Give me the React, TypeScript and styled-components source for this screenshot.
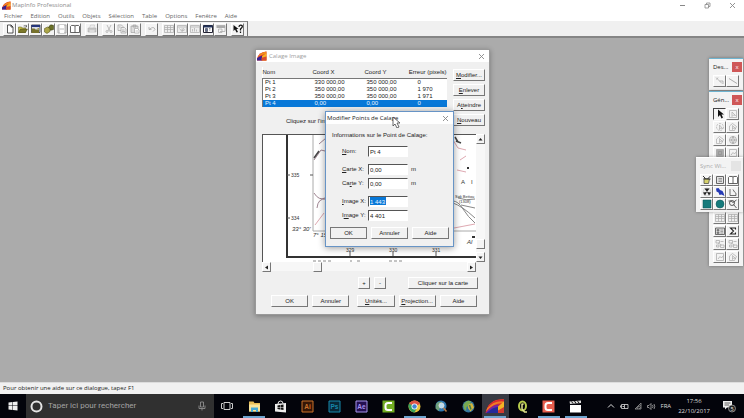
import React from "react";
import styled, { createGlobalStyle, css } from "styled-components";

const GlobalStyle = createGlobalStyle`
  *, *::before, *::after { box-sizing: border-box; }
  body { margin: 0; background: #ababab; overflow: hidden; }
  button, input { font: inherit; color: inherit; padding: 0; margin: 0; border-radius: 0; }
`;

const uiFont = `"Open Sans", "Noto Sans", sans-serif`;
const dialogFont = `"Liberation Sans", Arial, sans-serif`;

/* ---------- application shell ---------- */

const Shell = styled.div`
  display: flex;
  flex-direction: column;
  height: 100vh;
  font: 6px/8px ${uiFont};
  color: #333;
`;

const AppTitle = styled.header`
  display: flex;
  align-items: center;
  height: 10px;
  padding: 0 8px 0 2px;
  gap: 1px;
  background: #fff;
  color: #8c8c8c;
`;

const AppName = styled.h1`
  flex: 1;
  margin: 0;
  font: inherit;
`;

const CaptionButtons = styled.div`
  display: flex;
  gap: 17px;
`;

const CaptionButton = styled.button`
  display: flex;
  align-items: center;
  justify-content: center;
  width: 8px;
  height: 8px;
  border: 0;
  background: none;
  color: #888;
`;

const MenuBar = styled.nav`
  display: flex;
  align-items: center;
  gap: 8px;
  height: 11px;
  padding: 0 4px;
  background: #fff;
`;

const MenuItem = styled.button`
  border: 0;
  background: none;
  color: #666;
  line-height: 10px;
`;

const ToolStrip = styled.div`
  height: 17px;
  background: #f0f0f0;
  border-bottom: 2px solid #858585;
`;

const ToolBar = styled.div`
  display: flex;
  align-items: center;
  gap: 4px;
  width: max-content;
  height: 15px;
  padding: 0 3px;
  border-top: 1px solid #888;
  border-right: 1px solid #777;
`;

const ToolGroup = styled.div`
  display: flex;
`;

const ToolButton = styled.button<{ $pressed?: boolean }>`
  display: flex;
  align-items: center;
  justify-content: center;
  width: 13px;
  height: 13px;
  background: #f4f4f4;
  border: 1px solid;
  border-color: ${(p) => (p.$pressed ? "#444 #fff #fff #444" : "#fff #777 #777 #fff")};
`;

const Workspace = styled.main`
  position: relative;
  flex: 1;
  min-height: 0;
  background: #ababab;
`;

const StatusBar = styled.footer`
  height: 12px;
  padding: 0 3px;
  border-top: 1px solid #ddd;
  background: #f1f1f1;
  color: #222;
  font: 6px/11px ${uiFont};
`;

/* ---------- windows ---------- */

const WindowFrame = styled.section`
  position: absolute;
  left: 255px;
  top: 11px;
  width: 235px;
  background: #f0f0f0;
  border: 1px solid #999;
  box-shadow: 0 1px 5px rgba(0, 0, 0, 0.3);
  color: #222;
  font: 6px/7px ${dialogFont};
`;

const ModalFrame = styled(WindowFrame)`
  left: 325px;
  top: 73px;
  width: 129px;
  border: 1px solid #6794c6;
  box-shadow: 0 1px 7px rgba(0, 0, 0, 0.4);
`;

const TitleBar = styled.header<{ $muted?: boolean }>`
  display: flex;
  align-items: center;
  gap: 2px;
  height: 12px;
  padding: 0 4px 0 1px;
  background: #fff;
  color: ${(p) => (p.$muted ? "#a0a0a0" : "#222")};
  font: 6px/8px ${uiFont};
`;

const TitleText = styled.h2`
  flex: 1;
  margin: 0;
  font: inherit;
  white-space: nowrap;
`;

const WindowBody = styled.div`
  padding: 5px 4px 7px 6px;
`;

const UpperArea = styled.div`
  display: flex;
  justify-content: space-between;
  height: 64px;
`;

const PointsArea = styled.div`
  width: 184px;
`;

const PointTable = styled.table`
  width: 100%;
  table-layout: fixed;
  border-collapse: collapse;
  background: #fff;

  th, td {
    height: 7px;
    padding: 0 0 0 2px;
    text-align: left;
    font-weight: normal;
    line-height: 7px;
    white-space: nowrap;
  }
  th { height: 11px; background: #f0f0f0; padding-left: 0; }
  th:last-child { direction: rtl; }
  tbody { border-left: 1px solid #777; border-top: 1px solid #777; }
`;

const PointRow = styled.tr<{ $selected: boolean }>`
  ${(p) => p.$selected && css`background: #0878d8; color: #e7f3ff;`}
`;

const Hint = styled.p`
  margin: 11px 0 0 24px;
`;

const SideButtons = styled.div`
  display: flex;
  flex-direction: column;
  gap: 3px;
  width: 32px;
  padding-top: 2px;
`;

const PushButton = styled.button<{ $default?: boolean }>`
  min-width: 0;
  height: 12px;
  border: 1px solid;
  border-color: ${(p) => (p.$default ? "#777" : "#fff #777 #777 #fff")};
  background: #f1f1f1;
  white-space: nowrap;
  line-height: 9px;
  u { text-underline-offset: 1px; }
`;

const MapPane = styled.div`
  display: grid;
  grid-template-columns: 1fr 9px;
  grid-template-rows: 128px 9px;
  margin-top: 3px;
`;

const MapView = styled.svg`
  display: block;
  width: 100%;
  height: 128px;
  background: #fff;
  border-top: 1px solid #555;
  border-left: 1px solid #555;
`;

const ScrollTrack = styled.div<{ $vertical?: boolean }>`
  display: flex;
  flex-direction: ${(p) => (p.$vertical ? "column" : "row")};
  background: #f7f7f7;
`;

const ScrollButton = styled(ToolButton)`
  width: 9px;
  height: 10px;
  flex: none;
`;

const TrackGap = styled.span<{ $grow: number }>`
  flex: ${(p) => p.$grow};
`;

const VerticalGap = styled.span`
  height: 3px;
`;

const ZoomRow = styled.div`
  display: flex;
  justify-content: flex-end;
  gap: 4px;
  margin: 6px 7px 6px 0;
`;

const ZoomButton = styled(PushButton)`
  width: 12px;
`;

const MapButton = styled(PushButton)`
  width: 70px;
  margin-left: 18px;
`;

const ButtonRow = styled.div`
  display: grid;
  grid-template-columns: repeat(2, 1fr) 0 repeat(3, 1fr);
  column-gap: 4px;
  padding: 0 8px 0 9px;
`;

const ModalBody = styled.form`
  padding: 8px 4px 7px;
`;

const ModalHeading = styled.p`
  margin: 0 0 7px 2px;
`;

const FieldGroup = styled.div`
  display: grid;
  gap: 3px;
  margin: 0 0 7px 12px;
  &:last-of-type { margin-bottom: 6px; }
`;

const Field = styled.div`
  display: grid;
  grid-template-columns: 25px 40px 1fr;
  column-gap: 1px;
  align-items: center;
  height: 11px;
`;

const TextBox = styled.input<{ $selected?: boolean }>`
  width: 40px;
  height: 11px;
  padding-left: 1px;
  border: 1px solid;
  border-color: #555 #fff #fff #555;
  outline: 0;
  background: ${(p) =>
    p.$selected ? "linear-gradient(#0878d8, #0878d8) 1px 0 / 16px 8px no-repeat #fff" : "#fff"};
  color: ${(p) => (p.$selected ? "#e7f3ff" : "#222")};
`;

const Unit = styled.span`
  padding-left: 2px;
`;

const ModalButtons = styled.footer`
  display: grid;
  grid-template-columns: repeat(3, 1fr);
  column-gap: 4px;
`;

const Pointer = styled.svg`
  position: absolute;
  left: 66px;
  top: 4px;
  width: 9px;
  height: 12px;
`;

/* ---------- palettes ---------- */

const Palette = styled.section<{ $top: number }>`
  position: absolute;
  right: 1px;
  top: ${(p) => p.$top}px;
  width: 34px;
  padding: 0 3px 3px 4px;
  background: #f3f3f3;
  border-top: 1px solid #6fb4d0;
  box-shadow: 0 0 3px rgba(0, 0, 0, 0.35);
`;

const SyncPalette = styled(Palette)`
  width: 47px;
  border-top-color: #fff;
  padding: 0 4px 2px;
`;

const PaletteTitle = styled.header<{ $muted?: boolean }>`
  display: flex;
  align-items: center;
  justify-content: space-between;
  height: 16px;
  color: ${(p) => (p.$muted ? "#aaa" : "#222")};
`;

const PaletteHeading = styled.h3`
  margin: 0;
  font: inherit;
`;

const PaletteClose = styled.button<{ $muted?: boolean }>`
  width: 10px;
  height: 10px;
  margin-right: -2px;
  border: 0;
  background: ${(p) => (p.$muted ? "#e4e4e4" : "#cf5757")};
  color: #fff;
  line-height: 8px;
`;

const PaletteGrid = styled.div<{ $columns: number }>`
  display: grid;
  grid-template-columns: repeat(${(p) => p.$columns}, 13px);
  grid-auto-rows: 12px;
  row-gap: ${(p) => (p.$columns === 2 ? 1 : 0)}px;

  button { height: 12px; }
`;

/* ---------- taskbar ---------- */

const TaskBar = styled.nav`
  display: flex;
  height: 24px;
  background: #03040b;
  color: #ddd;
`;

const StartButton = styled.button`
  display: flex;
  align-items: center;
  justify-content: center;
  width: 26px;
  border: 0;
  background: none;
`;

const SearchBox = styled.label`
  display: flex;
  align-items: center;
  gap: 5px;
  width: 188px;
  padding: 0 7px 0 4px;
  background: #303030;
`;

const SearchInput = styled.input`
  flex: 1;
  min-width: 0;
  border: 0;
  outline: 0;
  background: none;
  font: 8px/10px Roboto, sans-serif;
  &::placeholder { color: #a4a4a4; opacity: 1; }
`;

const AppList = styled.div`
  display: grid;
  grid-template-columns: repeat(14, 1fr);
  flex: 0 0 375px;
`;

const AppButton = styled.button<{ $open?: boolean; $active?: boolean }>`
  display: flex;
  align-items: center;
  justify-content: center;
  border: 0;
  background: ${(p) => (p.$active ? "#383a43" : "none")};
`;

const AppFace = styled.span<{ $open?: boolean }>`
  display: flex;
  align-items: center;
  justify-content: center;
  width: 22px;
  height: 24px;
  box-shadow: ${(p) => (p.$open ? "inset 0 -2px #6ea4cf" : "none")};
`;

const Tray = styled.div`
  display: flex;
  align-items: center;
  justify-content: flex-end;
  flex: 1;
  gap: 5px;
  padding-right: 8px;
`;

const Clock = styled.time`
  margin: 0 7px 0 2px;
  text-align: center;
  line-height: 10px;
`;

const Glyph = styled.svg<{ $size: number }>`
  display: block;
  flex: none;
  width: ${(p) => p.$size}px;
  height: ${(p) => p.$size}px;
`;

/* ---------- drawings ---------- */

const MapInfoLogo = ({ size = 9 }: { size?: number }) => (
  <Glyph $size={size} viewBox="0 0 18 18" aria-hidden>
    <path d="M0 14Q3 2 17 1v16H0z" fill="#d92a32" />
    <path d="M3 8Q8 2 17 1v5Q8 6 2 12z" fill="#f28a1c" />
    <path d="M0 13q6-5 10-4v8H0z" fill="#3a2390" />
    <path d="M9 9l8-5v13H9z" fill="#f6b221" />
    <path d="M8 12l9-2v7H8z" fill="#d94a30" />
  </Glyph>
);

const CloseGlyph = () => (
  <Glyph $size={7} viewBox="0 0 14 14" fill="none" stroke="currentColor" strokeWidth="1.8" aria-hidden>
    <path d="M2 2l10 10M12 2L2 12" />
  </Glyph>
);

const drawings: Record<string, React.ReactNode> = {
  page: <path d="M5 2h7l4 4v12H5zM12 2v4h4" fill="#fff" stroke="#222" strokeWidth="1.5" />,
  folder: (
    <>
      <path d="M1 6h6l2 2h6v9H1z" fill="#c9c24c" stroke="#55521c" />
      <path d="M5 10h14l-4 7H1z" fill="#7d792a" stroke="#44420c" />
      <path d="M11 4q4-3 6 1m0-3v4h-4" fill="none" stroke="#222" />
    </>
  ),
  workspace: (
    <>
      <path d="M1 2h17v15H1z" fill="#d9dce8" stroke="#223" strokeWidth="1.5" />
      <path d="M1 2h17v4H1z" fill="#24367c" />
      <path d="M1 9h6l2 2h7v7H1z" fill="#77722c" />
      <path d="M13 8h3v3h-3z" fill="#a19c43" />
    </>
  ),
  dbms: (
    <>
      <path d="M9 6q4-7 10-3v8q-6 3-10 0z" fill="#697028" stroke="#34380c" />
      <path d="M1 9l6-3 5 3v6l-6 4-5-3z" fill="#aaa548" stroke="#49460c" />
    </>
  ),
  save: (
    <>
      <path d="M2 2h16v16H2z" fill="#ddd" stroke="#aaa" strokeWidth="2" />
      <path d="M5 2h9v6H5zM6 12h8v6H6z" fill="#fff" />
    </>
  ),
  book: <path d="M1 5l2-2h6l1 2 1-2h6l2 2v12H1zM10 5v12" fill="#fff" stroke="#333" strokeWidth="1.5" />,
  print: (
    <>
      <path d="M5 8l2-6h8l-1 6" fill="#eee" stroke="#bbb" />
      <path d="M2 8h16v8H2z" fill="#c8c8c8" stroke="#aaa" />
      <path d="M5 12h10v5H5z" fill="#ddd" />
    </>
  ),
  cut: (
    <g fill="none" stroke="#aaa" strokeWidth="1.5">
      <path d="M6 2l6 12M14 2L8 14" />
      <circle cx="6" cy="15" r="2" /><circle cx="14" cy="15" r="2" />
    </g>
  ),
  copy: (
    <g fill="#eee" stroke="#999" strokeWidth="1.2">
      <path d="M2 2h7l3 3v8H2z" /><path d="M8 7h7l3 3v8H8zM10 12h5M10 15h6M4 6h3" />
    </g>
  ),
  paste: (
    <g fill="#ddd" stroke="#999" strokeWidth="1.2">
      <path d="M2 4h14v13H2zM6 2h6v4H6z" /><path d="M9 9h6l3 3v6H9zM11 14h5" fill="#fff" />
    </g>
  ),
  undo: <path d="M4 6v5h5M4 11q10-8 12 0l-4 4" fill="none" stroke="#aaa" strokeWidth="1.6" />,
  table: (
    <g fill="#eee" stroke="#aaa" strokeWidth="1.4">
      <path d="M1 3h18v14H1zM1 7h18M1 11h18M7 3v14M13 3v14" />
    </g>
  ),
  mapWin: (
    <g fill="#eee" stroke="#aaa" strokeWidth="1.4">
      <path d="M1 3h18v14H1zM1 6h18M5 9l5 6V9M13 8l-2 6 5-3" />
    </g>
  ),
  chart: <path d="M1 3h18v14H1zM1 6h18M5 10v5M9 8v7M13 11v4" fill="#eee" stroke="#aaa" strokeWidth="1.4" />,
  layout: (
    <>
      <path d="M1 3h18v14H1z" fill="#fff" stroke="#223" strokeWidth="2" />
      <path d="M1 3h18v4H1z" fill="#24345c" />
      <path d="M5 9h4v6H5zM12 9h3M12 12h3" fill="#607090" stroke="#223" />
    </>
  ),
  redistrict: (
    <>
      <path d="M1 3h17v5H1z" fill="#aaa" />
      <path d="M1 3h17v12H8M5 10h7v7H5z" fill="none" stroke="#aaa" strokeWidth="1.5" />
    </>
  ),
  help: (
    <>
      <path d="M1 2v12l3-3 3 6 3-1-3-6h4z" fill="#111" />
      <path d="M12 6q0-4 3-4 5 0 3 5l-3 3v3M15 15v3" fill="none" stroke="#111" strokeWidth="2.5" />
    </>
  ),
  arrow: <path d="M6 1v15l4-4 3 7 3-2-3-6h5z" fill="#111" />,
  selectRect: <path d="M3 3h14v14H3zM8 6v9l3-3 4 1z" fill="none" stroke="#aaa" strokeWidth="1.4" />,
  selectRound: (
    <g fill="none" stroke="#aaa" strokeWidth="1.4">
      <circle cx="10" cy="10" r="7" strokeDasharray="4 2" /><path d="M9 6v9l2-3 4 1z" />
    </g>
  ),
  selectPoly: <path d="M3 8l6-5 8 6-4 8H3zM9 7v8l2-3 4 1z" fill="none" stroke="#aaa" strokeWidth="1.4" />,
  globe: (
    <g fill="none" stroke="#999" strokeWidth="1.4">
      <circle cx="10" cy="10" r="7" /><path d="M3 10h14M10 3q-6 7 0 14M10 3q6 7 0 14" />
    </g>
  ),
  invert: <path d="M3 3h14v14H3zM7 7h6v6H7z" fill="#aaa" stroke="#888" />,
  graph: <path d="M3 3h14v14H3zM6 14l4-5 3 3 4-5" fill="none" stroke="#aaa" strokeWidth="1.5" />,
  point: <path d="M2 3l12 12M6 3l-3 4M9 10h7v6" fill="none" stroke="#aaa" strokeWidth="1.6" />,
  line: <path d="M2 5l16 10" fill="none" stroke="#999" strokeWidth="1.6" />,
  legend: (
    <>
      <path d="M1 4h18v13H1z" fill="#ddd" stroke="#444" strokeWidth="1.5" />
      <path d="M4 7h4v3H4zM4 12h4v3H4zM11 8h5M11 11h5M11 14h5" fill="#888" stroke="#666" />
    </>
  ),
  sigma: <path d="M15 7V4H5l6 6-6 6h10v-3" fill="none" stroke="#222" strokeWidth="2.2" />,
  nodes: <path d="M2 3h7v5H2zM11 12h7v5h-7zM3 12h5v4H3zM11 5h6M6 8l7 4" fill="none" stroke="#aaa" strokeWidth="1.5" />,
  hotlink: (
    <>
      <path d="M4 7l11 1-2 9H4z" fill="#d7d26c" stroke="#444" strokeWidth="1.5" />
      <path d="M2 2l5 5M17 2l-6 6M3 8h14" stroke="#333" strokeWidth="2" />
    </>
  ),
  list: (
    <>
      <path d="M3 3h14v14H3z" fill="#e4e4e4" stroke="#666" strokeWidth="2" />
      <path d="M7 7h7M7 10h7M7 13h7" stroke="#777" strokeWidth="1.4" />
    </>
  ),
  radiation: (
    <>
      <circle cx="10" cy="10" r="8" fill="#eee" stroke="#bbb" />
      <path d="M10 10L5 3h10zM10 10L2 11l4 6zM10 10l8 1-4 6z" fill="#222" />
    </>
  ),
  pin: <path d="M2 3l5-1 3 4 5 2 2 4 2 6-6-3-4 1-2-5-4-2z" fill="#2439b5" />,
  region: <path d="M4 4v13h12q1-6-3-7l-3-5" fill="none" stroke="#555" strokeWidth="1.7" />,
  square: <path d="M2 2h16v16H2z" fill="#167b7c" stroke="#075456" />,
  disc: <circle cx="10" cy="10" r="8" fill="#167b7c" stroke="#075456" />,
  lens: (
    <g fill="none" stroke="#444" strokeWidth="1.7">
      <circle cx="8" cy="8" r="5" /><path d="M1 4h5l4 3 7-5M11 11l6 7" />
    </g>
  ),
};

const ToolGlyph = ({ name, size = 10 }: { name: string; size?: number }) => (
  <Glyph $size={size} viewBox="0 0 20 20" aria-hidden>{drawings[name]}</Glyph>
);

const toolGroups = [
  ["page", "folder", "workspace", "dbms", "save", "book"],
  ["print"],
  ["cut", "copy", "paste"],
  ["undo"],
  ["table", "mapWin", "chart", "layout", "redistrict"],
  ["help"],
];

const Tools = ({ names, pressed }: { names: string[]; pressed?: string }) => (
  <>
    {names.map((n, i) => (
      <ToolButton key={n + i} aria-label={n} $pressed={n === pressed}>
        <ToolGlyph name={n} />
      </ToolButton>
    ))}
  </>
);

const Arrow = ({ d }: { d: string }) => (
  <Glyph $size={5} viewBox="0 0 10 10" aria-hidden><path d={d} fill="#222" /></Glyph>
);

const ScannedMap = () => (
  <MapView viewBox="0 0 213 127" preserveAspectRatio="none" fontFamily="Liberation Sans" fontSize="5" fill="#333" role="img" aria-label="Carte">
    <path d="M24 0V122H213" fill="none" stroke="#333" strokeWidth="2" />
    <path d="M50 0V96H213" fill="none" stroke="#aaa" />
    <path d="M24 40h3M47 40h3M24 83h3M87 121v-4M130 121v-4M173 121v-4" fill="none" stroke="#555" />
    <path d="M51 25l7-10 4 1M56 9l7-6M54 73q1-10 9-9M51 58q5 8 11 5" fill="none" stroke="#a08592" />
    <path d="M190 5l5 8 8 2M197 25l6-4M191 93l21-4M194 35l9 2M52 90l9-12" fill="none" stroke="#dfa9b2" />
    <path d="M190 66q5 0 10 8t12 14M190 68q9 3 22 15M195 63q8 3 17 1M198 70l14 3" fill="none" stroke="#888" />
    <path d="M51 23l5-7M192 2l3 5M193 6l5 2" fill="none" stroke="#444" strokeWidth="1.5" />
    <text x="28" y="42">335</text><text x="28" y="85">334</text>
    <text x="83" y="117">329</text><text x="126" y="117">330</text><text x="169" y="117">331</text>
    <text x="29" y="96" fontSize="6" fontStyle="italic">33° 30'</text>
    <text x="50" y="102" fontSize="6" fontStyle="italic">7° 15'</text>
    <text x="198" y="49" fontSize="6">A</text><text x="208" y="49" fontSize="6">I</text>
    <text x="192" y="63" fontSize="4">Sidi Bettou</text><text x="196" y="68" fontSize="4">(1308)</text>
    <text x="204" y="109" fontSize="6" fontStyle="italic">Al</text>
    <path d="M50 126h18M87 126h2M94 126h3M126 126h14" stroke="#888" strokeDasharray="3 2" />
    <path d="M204 33h2M209 102h3" stroke="#333" strokeWidth="2" />
  </MapView>
);

/* ---------- data ---------- */

const points = [
  ["Pt 1", "330 000,00", "350 000,00", "0"],
  ["Pt 2", "350 000,00", "350 000,00", "1 970"],
  ["Pt 3", "350 000,00", "350 000,00", "1 971"],
  ["Pt 4", "0,00", "0,00", "0"],
];

type FieldSpec = { id: string; label: React.ReactNode; value: string; unit?: string; selected?: boolean };

const fieldGroups: FieldSpec[][] = [
  [{ id: "nom", label: <><u>N</u>om:</>, value: "Pt 4" }],
  [
    { id: "cx", label: <><u>C</u>arte X:</>, value: "0,00", unit: "m" },
    { id: "cy", label: <>Ca<u>r</u>te Y:</>, value: "0,00", unit: "m" },
  ],
  [
    { id: "ix", label: <><u>I</u>mage X:</>, value: "1 443", selected: true },
    { id: "iy", label: <>I<u>m</u>age Y:</>, value: "4 401" },
  ],
];

/* ---------- dialogs ---------- */

const CalageWindow = () => (
  <WindowFrame aria-label="Calage Image">
    <TitleBar $muted>
      <MapInfoLogo size={10} />
      <TitleText>Calage Image</TitleText>
      <CaptionButton aria-label="Fermer"><CloseGlyph /></CaptionButton>
    </TitleBar>
    <WindowBody>
      <UpperArea>
        <PointsArea>
          <PointTable>
            <colgroup><col width="50" /><col width="52" /><col width="51" /><col width="31" /></colgroup>
            <thead><tr><th>Nom</th><th>Coord X</th><th>Coord Y</th><th><bdi>Erreur (pixels)</bdi></th></tr></thead>
            <tbody>
              {points.map((p) => (
                <PointRow key={p[0]} $selected={p[0] === "Pt 4"}>
                  {p.map((c, i) => <td key={i}>{c}</td>)}
                </PointRow>
              ))}
            </tbody>
          </PointTable>
          <Hint>Cliquez sur l'im</Hint>
        </PointsArea>
        <SideButtons>
          <PushButton><u>M</u>odifier...</PushButton>
          <PushButton><u>E</u>nlever</PushButton>
          <PushButton>A<u>t</u>teindre</PushButton>
          <PushButton><u>N</u>ouveau</PushButton>
        </SideButtons>
      </UpperArea>
      <MapPane>
        <ScannedMap />
        <ScrollTrack $vertical>
          <ScrollButton aria-label="Haut"><Arrow d="M1 7l4-5 4 5z" /></ScrollButton>
          <TrackGap $grow={1} />
          <ScrollButton aria-label="Position verticale" />
          <VerticalGap />
          <ScrollButton aria-label="Bas"><Arrow d="M1 3l4 5 4-5z" /></ScrollButton>
        </ScrollTrack>
        <ScrollTrack>
          <ScrollButton aria-label="Gauche"><Arrow d="M8 1L2 5l6 4z" /></ScrollButton>
          <TrackGap $grow={42} />
          <ScrollButton aria-label="Position horizontale" />
          <TrackGap $grow={144} />
          <ScrollButton aria-label="Droite"><Arrow d="M2 1l6 4-6 4z" /></ScrollButton>
        </ScrollTrack>
      </MapPane>
      <ZoomRow>
        <ZoomButton>+</ZoomButton>
        <ZoomButton>-</ZoomButton>
        <MapButton>Cliquer sur la carte</MapButton>
      </ZoomRow>
      <ButtonRow>
        <PushButton>OK</PushButton>
        <PushButton>Annuler</PushButton>
        <span />
        <PushButton><u>U</u>nités...</PushButton>
        <PushButton><u>P</u>rojection...</PushButton>
        <PushButton>Aide</PushButton>
      </ButtonRow>
    </WindowBody>
  </WindowFrame>
);

const PointDialog = () => (
  <ModalFrame role="dialog" aria-label="Modifier Points de Calage">
    <TitleBar>
      <TitleText>Modifier Points de Calage</TitleText>
      <CaptionButton aria-label="Fermer"><CloseGlyph /></CaptionButton>
    </TitleBar>
    <ModalBody onSubmit={(e) => e.preventDefault()}>
      <ModalHeading>Informations sur le Point de Calage:</ModalHeading>
      {fieldGroups.map((group) => (
        <FieldGroup key={group[0].id}>
          {group.map((f) => (
            <Field key={f.id}>
              <label htmlFor={f.id}>{f.label}</label>
              <TextBox id={f.id} defaultValue={f.value} $selected={f.selected} />
              <Unit>{f.unit}</Unit>
            </Field>
          ))}
        </FieldGroup>
      ))}
      <ModalButtons>
        <PushButton $default>OK</PushButton>
        <PushButton type="button">Annuler</PushButton>
        <PushButton type="button">Aide</PushButton>
      </ModalButtons>
    </ModalBody>
    <Pointer viewBox="0 0 9 12" aria-hidden>
      <path d="M1 1v9l2-2 2 4 2-1-2-4h3z" fill="#fff" stroke="#444" strokeWidth="0.8" />
    </Pointer>
  </ModalFrame>
);

/* ---------- taskbar pieces ---------- */

const Badge = ({ text, color, fill }: { text: string; color: string; fill: string }) => (
  <Glyph $size={13} viewBox="0 0 26 26" aria-hidden>
    <path d="M2 2h22v22H2z" fill={fill} stroke={color} strokeWidth="2" />
    <text x="13" y="18" textAnchor="middle" fontFamily="Liberation Sans" fontWeight="bold" fontSize="13" fill={color}>{text}</text>
  </Glyph>
);

const CamGlyph = ({ fill }: { fill: string }) => (
  <Glyph $size={13} viewBox="0 0 26 26" aria-hidden>
    <path d="M1 1h24v24H1z" fill={fill} />
    <path d="M20 6h-8q-5 0-5 5v4q0 5 5 5h8" fill="none" stroke="#fff" strokeWidth="4" />
  </Glyph>
);

const apps: { name: string; open?: boolean; active?: boolean; icon: React.ReactNode }[] = [
  {
    name: "Vue des tâches",
    icon: (
      <Glyph $size={12} viewBox="0 0 24 24" fill="none" stroke="#ccc" strokeWidth="2">
        <path d="M6 5h12v14H6zM4 7H1v10h3M20 7h3v10h-3" />
      </Glyph>
    ),
  },
  {
    name: "Explorateur", open: true,
    icon: (
      <Glyph $size={13} viewBox="0 0 26 26">
        <path d="M2 3h9l2 3h11v17H2z" fill="#e7bd57" /><path d="M2 9h22v14H2z" fill="#f8e49b" />
        <path d="M6 15h14v9h-4v-4h-6v4H6z" fill="#46a9d6" />
      </Glyph>
    ),
  },
  {
    name: "Store",
    icon: (
      <Glyph $size={13} viewBox="0 0 26 26">
        <path d="M2 8l22-2v19L2 23z" fill="#eee" /><path d="M8 8q0-6 5-6t5 5" fill="none" stroke="#eee" strokeWidth="2" />
        <path d="M7 11l5-1v4H7zM13 10l6-1v5h-6zM7 15h5v4l-5-1zM13 15h6v5l-6-1z" fill="#111" />
      </Glyph>
    ),
  },
  { name: "Illustrator", icon: <Badge text="Ai" color="#cb722b" fill="#351606" /> },
  { name: "Photoshop", icon: <Badge text="Ps" color="#1689ad" fill="#082838" /> },
  { name: "After Effects", icon: <Badge text="Ae" color="#a795ed" fill="#251051" /> },
  { name: "Camtasia", icon: <CamGlyph fill="#72ad23" /> },
  {
    name: "Chrome", open: true,
    icon: (
      <Glyph $size={13} viewBox="0 0 26 26">
        <circle cx="13" cy="13" r="12" fill="#eac33c" />
        <path d="M13 13L2 8Q6 1 13 1q8 0 11 7z" fill="#dd5144" />
        <path d="M13 13L2 7q-3 6 2 13 4 5 9 5l5-9z" fill="#38a35b" />
        <circle cx="13" cy="13" r="6" fill="#fff" /><circle cx="13" cy="13" r="4.5" fill="#4285d4" />
      </Glyph>
    ),
  },
  {
    name: "Recherche SIG",
    icon: (
      <Glyph $size={13} viewBox="0 0 26 26">
        <circle cx="12" cy="12" r="11" fill="#2f78b0" /><path d="M2 8q5-7 13-3l-3 7-5 10-6-5z" fill="#6fa07c" />
        <circle cx="13" cy="11" r="5" fill="#b8dcf1" stroke="#ddd" strokeWidth="2" /><path d="M17 16l6 7" stroke="#bc7b43" strokeWidth="3" />
      </Glyph>
    ),
  },
  {
    name: "Globe",
    icon: (
      <Glyph $size={13} viewBox="0 0 26 26">
        <circle cx="13" cy="13" r="12" fill="#3477a0" /><path d="M3 9q7-11 15-6l-3 8-6 3-1 8q-6-4-5-13z" fill="#76a952" />
        <path d="M13 9l7-3 4 9-7 8-5-7z" fill="#d3b53c" /><path d="M15 10l3 9" stroke="#3f7c4a" strokeWidth="3" />
      </Glyph>
    ),
  },
  {
    name: "MapInfo", open: true, active: true,
    icon: (
      <Glyph $size={22} viewBox="0 0 44 44">
        <path d="M3 36Q9 10 32 9h8v27H3z" fill="#dc282c" />
        <path d="M6 27Q17 7 40 9v8q-18-3-36 16z" fill="#ef7c25" />
        <path d="M9 21Q20 7 40 9v4Q20 10 6 27z" fill="#d92731" />
        <path d="M3 36q12-17 26-17v17H3z" fill="#7626a0" />
        <path d="M5 36q14-13 24-12v12z" fill="#252a9a" />
        <path d="M28 23l12-10v16l-12 7z" fill="#f3b526" />
        <path d="M28 36v-5l12-7v12z" fill="#d33b30" />
      </Glyph>
    ),
  },
  {
    name: "QGIS",
    icon: (
      <Glyph $size={13} viewBox="0 0 26 26">
        <ellipse cx="13" cy="12" rx="7" ry="9" fill="none" stroke="#b7cc4c" strokeWidth="4" />
        <path d="M12 7v11l5 6h5M12 10l3-3" fill="none" stroke="#dfdf90" strokeWidth="3" />
      </Glyph>
    ),
  },
  { name: "Camtasia Recorder", open: true, icon: <CamGlyph fill="#e85f4f" /> },
  {
    name: "Film", open: true,
    icon: (
      <Glyph $size={13} viewBox="0 0 26 26">
        <path d="M2 10h22v15H2z" fill="#fff" /><path d="M1 3l23-2v5L2 8z" fill="#ddd" />
        <path d="M5 3l3 4M11 2l3 5M17 2l3 4" stroke="#111" strokeWidth="2" />
      </Glyph>
    ),
  },
];

export default function App() {
  return (
    <Shell>
      <GlobalStyle />
      <AppTitle>
        <MapInfoLogo />
        <AppName>MapInfo Professional</AppName>
        <CaptionButtons>
          <CaptionButton aria-label="Réduire"><Glyph $size={7} viewBox="0 0 14 14"><path d="M2 7h10" stroke="currentColor" strokeWidth="2" /></Glyph></CaptionButton>
          <CaptionButton aria-label="Restaurer"><Glyph $size={7} viewBox="0 0 14 14" fill="none" stroke="currentColor" strokeWidth="1.6"><path d="M2 5h7v7H2zM5 5V2h7v7H9" /></Glyph></CaptionButton>
          <CaptionButton aria-label="Fermer"><CloseGlyph /></CaptionButton>
        </CaptionButtons>
      </AppTitle>
      <MenuBar>
        {["Fichier", "Edition", "Outils", "Objets", "Sélection", "Table", "Options", "Fenêtre", "Aide"].map((m) => (
          <MenuItem key={m}>{m}</MenuItem>
        ))}
      </MenuBar>
      <ToolStrip>
        <ToolBar>
          {toolGroups.map((g) => <ToolGroup key={g[0]}><Tools names={g} /></ToolGroup>)}
        </ToolBar>
      </ToolStrip>

      <Workspace>
        <CalageWindow />
        <PointDialog />
        <Palette $top={20}>
          <PaletteTitle><PaletteHeading>Des...</PaletteHeading><PaletteClose aria-label="Fermer">x</PaletteClose></PaletteTitle>
          <PaletteGrid $columns={2}><Tools names={["point", "line"]} /></PaletteGrid>
        </Palette>
        <Palette $top={53}>
          <PaletteTitle><PaletteHeading>Gén...</PaletteHeading><PaletteClose aria-label="Fermer">x</PaletteClose></PaletteTitle>
          <PaletteGrid $columns={2}>
            <Tools
              pressed="arrow"
              names={["arrow", "selectRect", "selectRound", "selectPoly", "selectPoly", "globe", "invert", "graph",
                "selectRect", "selectRound", "lens", "lens", "globe", "line", "table", "table", "table", "table",
                "legend", "sigma", "nodes", "nodes", "graph", "selectPoly"]}
            />
          </PaletteGrid>
        </Palette>
        <SyncPalette $top={119}>
          <PaletteTitle $muted><PaletteHeading>Sync Wi...</PaletteHeading><PaletteClose $muted aria-label="Fermer" /></PaletteTitle>
          <PaletteGrid $columns={3}>
            <Tools names={["hotlink", "list", "book", "radiation", "pin", "region", "square", "disc", "lens"]} />
          </PaletteGrid>
        </SyncPalette>
      </Workspace>

      <StatusBar>Pour obtenir une aide sur ce dialogue, tapez F1</StatusBar>
      <TaskBar>
        <StartButton aria-label="Démarrer">
          <Glyph $size={10} viewBox="0 0 20 20"><path d="M1 3l8-1v7H1zM10 2l9-1v8h-9zM1 10h8v8l-8-1zM10 10h9v9l-9-1z" fill="#eee" /></Glyph>
        </StartButton>
        <SearchBox>
          <Glyph $size={13} viewBox="0 0 26 26"><circle cx="13" cy="13" r="10" fill="none" stroke="#e4e4e4" strokeWidth="4" /></Glyph>
          <SearchInput aria-label="Rechercher" placeholder="Taper ici pour rechercher" />
          <Glyph $size={10} viewBox="0 0 20 20" fill="none" stroke="#999" strokeWidth="1.6"><path d="M7 2h6v10H7zM4 9v6h12V9M10 15v4" /></Glyph>
        </SearchBox>
        <AppList>
          {apps.map((a) => (
            <AppButton key={a.name} aria-label={a.name} $active={a.active}>
              <AppFace $open={a.open}>{a.icon}</AppFace>
            </AppButton>
          ))}
        </AppList>
        <Tray>
          <Glyph $size={8} viewBox="0 0 16 16" fill="none" stroke="#ddd" strokeWidth="2"><path d="M2 11l6-6 6 6" /></Glyph>
          <Glyph $size={9} viewBox="0 0 18 18" fill="none" stroke="#ddd" strokeWidth="1.6"><path d="M3 5h13v8H3zM1 7v4M9 5v8M5 9h3" /></Glyph>
          <Glyph $size={8} viewBox="0 0 16 16" fill="none" stroke="#999" strokeWidth="1.6"><path d="M2 14L14 2v12zM6 14q0-5 8-7M10 14q0-2 4-3" /></Glyph>
          <Glyph $size={9} viewBox="0 0 18 18" fill="none" stroke="#aaa" strokeWidth="1.6"><path d="M1 7h3l4-4v12l-4-4H1zM11 6q2 3 0 6M14 4q3 5 0 10" /></Glyph>
          <span>FRA</span>
          <Clock>17:56<br />22/10/2017</Clock>
          <Glyph $size={14} viewBox="0 0 28 28">
            <path d="M2 4h18v13H10l-4 4v-4H2z" fill="#eee" /><path d="M5 8h12M5 12h9" stroke="#333" strokeWidth="1.5" />
            <circle cx="20" cy="19" r="7" fill="#222" stroke="#aaa" strokeWidth="1.5" />
            <text x="20" y="23" textAnchor="middle" fontFamily="Open Sans" fontSize="11" fill="#eee">5</text>
          </Glyph>
        </Tray>
      </TaskBar>
    </Shell>
  );
}
